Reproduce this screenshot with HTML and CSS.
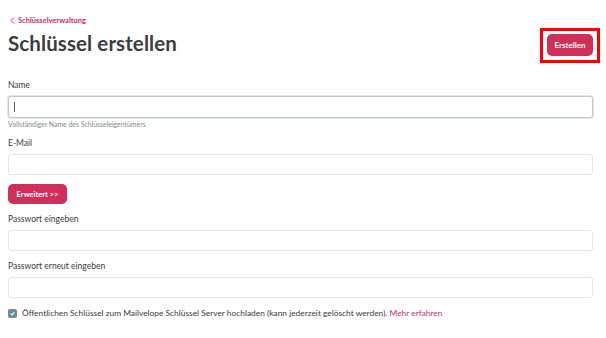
FILE: index.html
```html
<!DOCTYPE html>
<html lang="de">
<head>
<meta charset="utf-8">
<link rel="stylesheet" href="styles.css">
</head>
<body>
<div class="page">
  <header class="head">
    <div class="head-left">
      <a class="back" href="#"><svg class="chev" width="5" height="7" viewBox="0 0 5 7"><path d="M4 0.5 L1 3.5 L4 6.5" fill="none" stroke="currentColor" stroke-width="1"/></svg>Schlüsselverwaltung</a>
      <h1 class="title">Schlüssel erstellen</h1>
    </div>
    <div class="create-wrap">
      <button class="btn btn-create">Erstellen</button>
      <span class="highlight"></span>
    </div>
  </header>
  <form class="form">
    <div class="field">
      <label class="label">Name</label>
      <div class="input focused"><span class="caret"></span></div>
      <div class="help">Vollständiger Name des Schlüsseleigentümers</div>
    </div>
    <div class="field">
      <label class="label">E-Mail</label>
      <div class="input"></div>
    </div>
    <div class="adv"><button type="button" class="btn btn-adv">Erweitert &gt;&gt;</button></div>
    <div class="field">
      <label class="label">Passwort eingeben</label>
      <div class="input"></div>
    </div>
    <div class="field">
      <label class="label">Passwort erneut eingeben</label>
      <div class="input"></div>
    </div>
    <div class="check-row">
      <span class="checkbox"><svg width="9" height="9" viewBox="0 0 9 9"><path d="M2.6 4.7 L3.9 5.9 L6.4 3.3" fill="none" stroke="#fff" stroke-width="1.1"/></svg></span>
      <span class="check-text">Öffentlichen Schlüssel zum Mailvelope Schlüssel Server hochladen (kann jederzeit gelöscht werden). <a href="#" class="more">Mehr erfahren</a></span>
    </div>
  </form>
</div>
</body>
</html>
```
FILE: styles.css
```css
* { box-sizing: border-box; }
html, body { margin: 0; padding: 0; background: #fff; }
body {
  font-family: "Lato", "Open Sans", sans-serif;
  color: #3a3a3a;
  width: 606px;
  height: 338px;
  overflow: hidden;
}
.page { padding: 15px 13px 0 8px; }
.head { display: flex; justify-content: space-between; align-items: flex-start; }
.head-left { display: flex; flex-direction: column; }
.back {
  color: #cf2f58;
  font-size: 7.5px;
  font-weight: 700;
  text-decoration: none;
  display: flex;
  align-items: center;
  gap: 3px;
  padding-left: 2px;
  height: 11px;
}
.chev { display: block; }
.title {
  margin: 5px 0 0 0;
  font-size: 20.5px;
  font-weight: 700;
  color: #3d3d3f;
  line-height: 24px;
  letter-spacing: 0.1px;
}
.create-wrap { position: relative; margin-top: 19px; }
.btn {
  border: none;
  background: #cf2f58;
  color: #fff;
  font-family: inherit;
  font-weight: 700;
  border-radius: 5px;
  cursor: pointer;
}
.btn-create { width: 46px; height: 22px; font-size: 8px; padding: 0; display: block; }
.highlight {
  position: absolute;
  left: -7px; top: -6px; right: -7px; bottom: -7px;
  border: 3px solid #ff0000;
}
.form { margin-top: 24px; display: flex; flex-direction: column; }
.field { display: flex; flex-direction: column; }
.label { font-size: 8.5px; color: #3a3a3a; height: 10px; line-height: 10px; }
.input {
  margin-top: 6px;
  height: 21px;
  border: 1px solid #e4e6e8;
  border-radius: 3px;
  background: #fff;
  position: relative;
}
.input.focused { border-color: #bcc9cf; box-shadow: 0 0 0 1px #dfe7ea; height: 22px; }
.caret { position: absolute; left: 5px; top: 5px; width: 1px; height: 10px; background: #555; }
.help { font-size: 6.9px; color: #8a8a8a; margin-top: 2px; height: 8px; line-height: 8px; }
.field + .field { margin-top: 10px; }
.adv { margin-top: 9px; margin-bottom: 10px; }
.btn-adv { height: 20px; width: 59px; font-size: 7.5px; padding: 0; display: block; }
.check-row { display: flex; align-items: center; margin-top: 10px; gap: 5px; }
.checkbox {
  width: 9px; height: 9px;
  background: #6e8b98;
  border-radius: 2px;
  display: flex;
  flex-shrink: 0;
}
.check-text { font-size: 8.4px; color: #3a3a3a; line-height: 10px; }
.more { color: #cf2f58; text-decoration: none; }
```
